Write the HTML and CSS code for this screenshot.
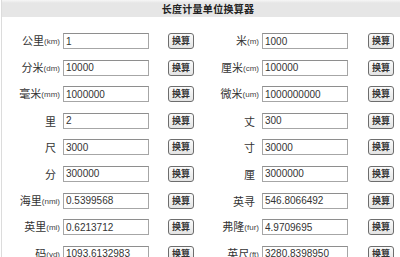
FILE: index.html
```html
<!DOCTYPE html>
<html lang="zh-CN">
<head>
    <meta charset="UTF-8">
    <meta name="viewport" content="width=device-width, initial-scale=1.0">
    <title>长度计量单位换算器</title>
    <link rel="stylesheet" href="styles.css">
</head>
<body>
    <div class="converter">
        <!-- Title bar -->
        <div class="title-bar">长度计量单位换算器</div>

        <!-- Unit rows -->
        <div class="units">
            <label>公里<small>(km)</small></label><input type="text" value="1"><button>换算</button>
            <label>米<small>(m)</small></label><input type="text" value="1000"><button>换算</button>

            <label>分米<small>(dm)</small></label><input type="text" value="10000"><button>换算</button>
            <label>厘米<small>(cm)</small></label><input type="text" value="100000"><button>换算</button>

            <label>毫米<small>(mm)</small></label><input type="text" value="1000000"><button>换算</button>
            <label>微米<small>(um)</small></label><input type="text" value="1000000000"><button>换算</button>

            <label class="plain">里</label><input type="text" value="2"><button>换算</button>
            <label class="plain">丈</label><input type="text" value="300"><button>换算</button>

            <label class="plain">尺</label><input type="text" value="3000"><button>换算</button>
            <label class="plain">寸</label><input type="text" value="30000"><button>换算</button>

            <label class="plain">分</label><input type="text" value="300000"><button>换算</button>
            <label class="plain">厘</label><input type="text" value="3000000"><button>换算</button>

            <label>海里<small>(nmi)</small></label><input type="text" value="0.5399568"><button>换算</button>
            <label class="plain">英寻</label><input type="text" value="546.8066492"><button>换算</button>

            <label>英里<small>(mi)</small></label><input type="text" value="0.6213712"><button>换算</button>
            <label>弗隆<small>(fur)</small></label><input type="text" value="4.9709695"><button>换算</button>

            <label>码<small>(yd)</small></label><input type="text" value="1093.6132983"><button>换算</button>
            <label>英尺<small>(ft)</small></label><input type="text" value="3280.8398950"><button>换算</button>
        </div>
    </div>
</body>
</html>
```

FILE: styles.css
```css
body {
    margin: 0;
    padding: 0;
    background-color: #ffffff;
    font-family: "Liberation Sans", Arial, "Noto Sans CJK SC", sans-serif;
    color: #333;
}

.converter {
    width: 400px;
    border-left: 1px solid #dcdcdc;
    margin-left: 1px;
}

/* Title bar */
.title-bar {
    height: 14px;
    line-height: 14px;
    padding: 2px 0 1px 12px;
    background: linear-gradient(#f6f6f6, #e6e6e6 3px, #e6e6e6);
    text-align: center;
    font-family: "Noto Sans CJK SC", sans-serif;
    font-size: 10px;
    font-weight: bold;
    color: #222;
    letter-spacing: 0.3px;
}

/* Unit grid */
.units {
    display: grid;
    grid-template-columns: 58px 108px 27px 64px 109px 27px;
    grid-auto-rows: 16px;
    row-gap: 10.6px;
    padding-top: 16px;
    align-items: center;
}

.units label {
    text-align: right;
    font-family: "Noto Sans CJK SC", sans-serif;
    font-size: 11px;
    color: #333;
    white-space: nowrap;
    line-height: 16px;
}

.units label small {
    font-family: "Liberation Sans", Arial, sans-serif;
    font-size: 8px;
    color: #444;
    vertical-align: 1px;
}

.units label.plain {
    padding-right: 4px;
}

.units input {
    box-sizing: border-box;
    width: 86px;
    height: 16px;
    margin-left: 3px;
    padding: 0 2px;
    border: 1px solid #a6a6a6;
    border-top-color: #8e8e8e;
    font-family: "Liberation Sans", Arial, sans-serif;
    font-size: 10px;
    color: #333;
    background: #fff;
}

.units button {
    box-sizing: border-box;
    width: 26px;
    height: 16px;
    padding: 0;
    border: 1px solid #6d6d6d;
    border-radius: 3px;
    background: linear-gradient(#fbfbfb, #e4e4e4);
    font-family: "Noto Sans CJK SC", sans-serif;
    font-size: 9px;
    font-weight: bold;
    color: #333;
    line-height: 14px;
}
```
